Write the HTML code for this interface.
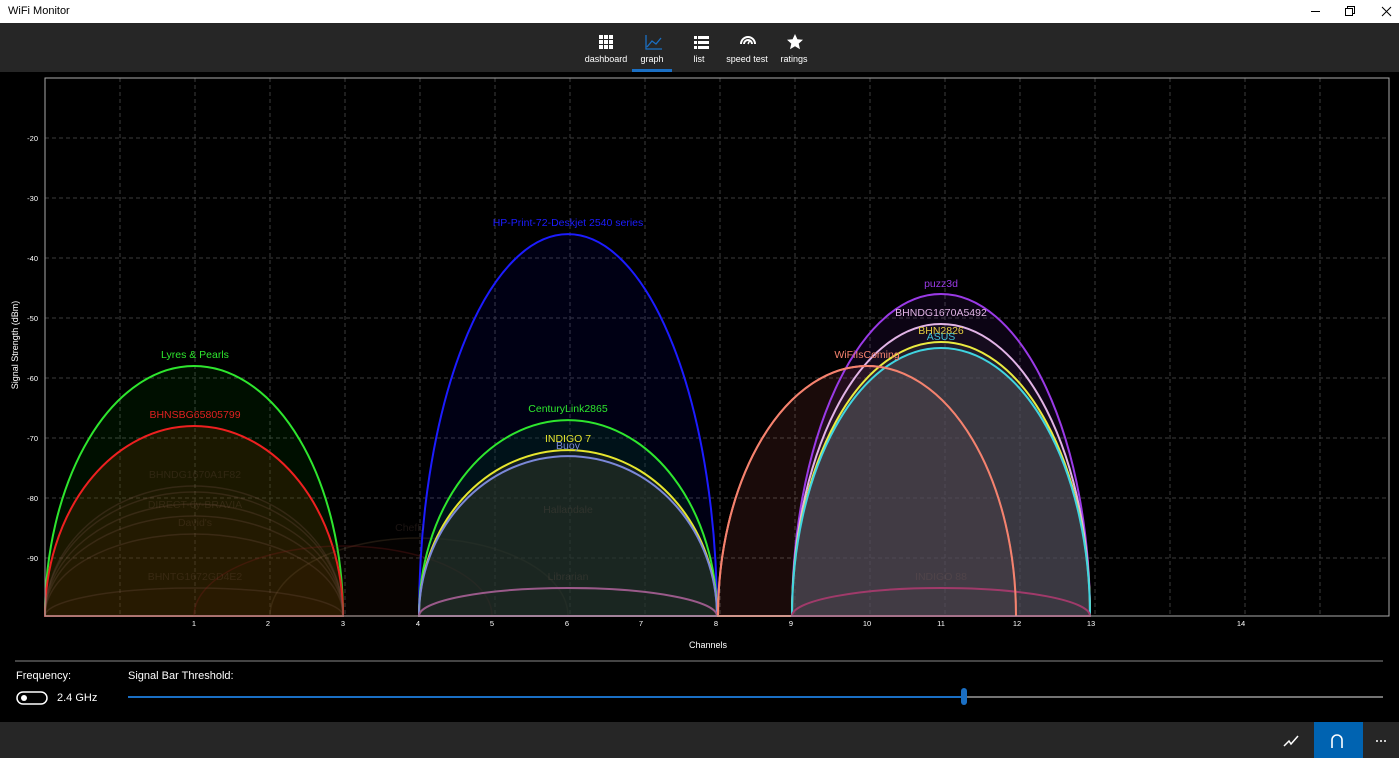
<!DOCTYPE html>
<html><head><meta charset="utf-8"><style>
html,body{margin:0;padding:0;width:1399px;height:758px;overflow:hidden;background:#000;font-family:"Segoe UI","Liberation Sans",sans-serif;}
#title{position:absolute;left:0;top:0;width:1399px;height:23px;background:#fff;}
#title span{position:absolute;left:8px;top:5px;font-size:11px;color:#000;}
#nav{position:absolute;left:0;top:23px;width:1399px;height:49px;background:#262626;}
.nb{position:absolute;top:31px;font-size:9px;color:#fff;text-align:center;width:60px;}
#bot{position:absolute;left:0;top:722px;width:1399px;height:36px;background:#262626;}
.t{position:absolute;color:#fff;font-size:11px;}
</style></head><body>
<div id="title"><span>WiFi Monitor</span>
<svg style="position:absolute;left:1300px;top:0" width="99" height="23"><g stroke="#000" stroke-width="1" fill="none"><line x1="11" y1="11.5" x2="20" y2="11.5"/><rect x="45.5" y="8.5" width="7" height="7"/><path d="M47.5 8.5V6.5h7v7h-2"/><path d="M82 7l9 9M91 7l-9 9"/></g></svg>
</div>
<div id="nav">
<svg width="1399" height="49" style="position:absolute;left:0;top:0">
<g fill="#fff">
<rect x="599" y="12" width="4" height="4"/><rect x="604" y="12" width="4" height="4"/><rect x="609" y="12" width="4" height="4"/>
<rect x="599" y="17" width="4" height="4"/><rect x="604" y="17" width="4" height="4"/><rect x="609" y="17" width="4" height="4"/>
<rect x="599" y="22" width="4" height="4"/><rect x="604" y="22" width="4" height="4"/><rect x="609" y="22" width="4" height="4"/>
<rect x="694" y="13" width="3" height="3"/><rect x="698" y="13" width="11" height="3"/>
<rect x="694" y="18" width="3" height="3"/><rect x="698" y="18" width="11" height="3"/>
<rect x="694" y="23" width="3" height="3"/><rect x="698" y="23" width="11" height="3"/>
<path d="M795 11l2.4 5.3 5.6.5-4.3 3.8 1.3 5.6-5-3-5 3 1.3-5.6-4.3-3.8 5.6-.5z"/>
</g>
<path d="M646 12v14h16M647 24l5-6 4 3 5-6" stroke="#1a6fc4" stroke-width="1.3" fill="none"/>
<path d="M741 21a7 7 0 0 1 14 0M744 21a4 4 0 0 1 8 0" stroke="#fff" stroke-width="2" fill="none"/><path d="M748 21l2-4" stroke="#fff" stroke-width="1.5"/>
<rect x="632" y="46" width="40" height="3" fill="#1a6fc4"/>
</svg>
<div class="nb" style="left:576px">dashboard</div>
<div class="nb" style="left:622px">graph</div>
<div class="nb" style="left:669px">list</div>
<div class="nb" style="left:717px">speed test</div>
<div class="nb" style="left:764px">ratings</div>
</div>
<svg width="1399" height="650" style="position:absolute;left:0;top:72px" font-family="Segoe UI, Liberation Sans, sans-serif">
<g transform="translate(0,-72)">
<g stroke="#3c3c3c" stroke-dasharray="4,3" stroke-width="1">
<line x1="120" y1="78" x2="120" y2="616"/><line x1="195" y1="78" x2="195" y2="616"/><line x1="270" y1="78" x2="270" y2="616"/><line x1="345" y1="78" x2="345" y2="616"/><line x1="420" y1="78" x2="420" y2="616"/><line x1="495" y1="78" x2="495" y2="616"/><line x1="570" y1="78" x2="570" y2="616"/><line x1="645" y1="78" x2="645" y2="616"/><line x1="720" y1="78" x2="720" y2="616"/><line x1="795" y1="78" x2="795" y2="616"/><line x1="870" y1="78" x2="870" y2="616"/><line x1="945" y1="78" x2="945" y2="616"/><line x1="1020" y1="78" x2="1020" y2="616"/><line x1="1095" y1="78" x2="1095" y2="616"/><line x1="1170" y1="78" x2="1170" y2="616"/><line x1="1245" y1="78" x2="1245" y2="616"/><line x1="1320" y1="78" x2="1320" y2="616"/>
<line x1="45" y1="138" x2="1389" y2="138"/><line x1="45" y1="198" x2="1389" y2="198"/><line x1="45" y1="258" x2="1389" y2="258"/><line x1="45" y1="318" x2="1389" y2="318"/><line x1="45" y1="378" x2="1389" y2="378"/><line x1="45" y1="438" x2="1389" y2="438"/><line x1="45" y1="498" x2="1389" y2="498"/><line x1="45" y1="558" x2="1389" y2="558"/>
</g>
<!-- ch1 -->
<path d="M45 616A149 250 0 0 1 343 616Z" fill="rgba(0,255,0,0.06)" stroke="#2ee62e" stroke-width="2"/>
<path d="M45 616A149 190 0 0 1 343 616Z" fill="rgba(90,45,0,0.3)" stroke="#ee2020" stroke-width="2"/>
<g fill="rgba(100,60,20,0.04)" stroke="rgba(140,100,90,0.22)" stroke-width="1.5">
<path d="M45 616A149 130 0 0 1 343 616Z"/><path d="M45 616A149 124 0 0 1 343 616Z"/><path d="M45 616A149 112 0 0 1 343 616Z"/><path d="M45 616A149 100 0 0 1 343 616Z"/><path d="M45 616A149 82 0 0 1 343 616Z"/><path d="M45 616A149 28 0 0 1 343 616Z"/>
<path d="M270 616A149 78 0 0 1 568 616Z" stroke="rgba(120,90,60,0.25)"/>
<path d="M194 616A149 70 0 0 1 492 616Z" stroke="rgba(130,30,30,0.3)"/>
</g>
<!-- ch6 -->
<path d="M419 616A149 382 0 0 1 717 616Z" fill="rgba(0,0,255,0.08)" stroke="#1c1cff" stroke-width="2"/>
<path d="M419 616A149 196 0 0 1 717 616Z" fill="rgba(0,60,40,0.3)" stroke="#2ee62e" stroke-width="2"/>
<path d="M419 616A149 166 0 0 1 717 616Z" fill="rgba(60,60,40,0.3)" stroke="#e6e62e" stroke-width="2"/>
<path d="M419 616A149 160 0 0 1 717 616Z" fill="rgba(40,50,40,0.4)" stroke="#7b88d8" stroke-width="2"/>
<path d="M419 616A149 28 0 0 1 717 616Z" fill="none" stroke="#9a5a8a" stroke-width="2"/>
<!-- ch10/11 -->
<path d="M718 616A149 250 0 0 1 1016 616Z" fill="rgba(255,110,100,0.1)" stroke="#f5826e" stroke-width="2"/>
<path d="M792 616A149 322 0 0 1 1090 616Z" fill="rgba(120,40,200,0.1)" stroke="#9a3ae6" stroke-width="2"/>
<path d="M792 616A149 292 0 0 1 1090 616Z" fill="rgba(100,70,110,0.12)" stroke="#e2b4e6" stroke-width="2"/>
<path d="M792 616A149 274 0 0 1 1090 616Z" fill="rgba(70,70,70,0.3)" stroke="#eaea40" stroke-width="2"/>
<path d="M792 616A149 268 0 0 1 1090 616Z" fill="rgba(80,84,90,0.5)" stroke="#40d4e0" stroke-width="2"/>
<path d="M792 616A149 28 0 0 1 1090 616Z" fill="none" stroke="#a03a6a" stroke-width="2"/>
<path d="M718 616A149 250 0 0 1 1016 616" fill="none" stroke="#f5826e" stroke-width="2"/>
<!-- labels -->
<g font-size="10.5" text-anchor="middle">
<text x="195" y="358" fill="#2ee62e">Lyres &amp; Pearls</text>
<text x="195" y="418" fill="#e02020">BHNSBG65805799</text>
<text x="568" y="226" fill="#1c1cff">HP-Print-72-Deskjet 2540 series</text>
<text x="568" y="412" fill="#2ee62e">CenturyLink2865</text>
<text x="568" y="442" fill="#e6e62e">INDIGO 7</text>
<text x="568" y="449" fill="#7b88d8">Buoy</text>
<text x="867" y="358" fill="#f5826e">WiFiIsComing</text>
<text x="941" y="287" fill="#9a3ae6">puzz3d</text>
<text x="941" y="316" fill="#e2b4e6">BHNDG1670A5492</text>
<text x="941" y="334" fill="#e6d040">BHN2826</text>
<text x="941" y="340" fill="#40c4d8">ASUS</text>
<g fill="rgba(150,110,100,0.18)"><text x="195" y="478">BHNDG1670A1F82</text><text x="195" y="508">DIRECT-0y-BRAVIA</text><text x="195" y="526">David's</text><text x="195" y="580">BHNTG1672GD4E2</text><text x="410" y="531">ChefD</text><text x="568" y="513">Hallandale</text><text x="568" y="580">Librarian</text><text x="941" y="580">INDIGO 88</text></g>
</g>
<rect x="45" y="78" width="1344" height="538" fill="none" stroke="#aaa" stroke-width="1"/>
<g font-size="7.5" fill="#fff" text-anchor="end">
<text x="38" y="141">-20</text><text x="38" y="201">-30</text><text x="38" y="261">-40</text><text x="38" y="321">-50</text><text x="38" y="381">-60</text><text x="38" y="441">-70</text><text x="38" y="501">-80</text><text x="38" y="561">-90</text>
</g>
<g font-size="7.5" fill="#fff" text-anchor="middle">
<text x="194" y="626">1</text><text x="268" y="626">2</text><text x="343" y="626">3</text><text x="418" y="626">4</text><text x="492" y="626">5</text><text x="567" y="626">6</text><text x="641" y="626">7</text><text x="716" y="626">8</text><text x="791" y="626">9</text><text x="867" y="626">10</text><text x="941" y="626">11</text><text x="1017" y="626">12</text><text x="1091" y="626">13</text><text x="1241" y="626">14</text>
<text x="708" y="648" font-size="9">Channels</text>
<text transform="translate(18,345) rotate(-90)" font-size="9">Signal Strength (dBm)</text>
</g>
<line x1="15" y1="661" x2="1383" y2="661" stroke="#888" stroke-width="1"/>
<line x1="128" y1="697" x2="964" y2="697" stroke="#1a6fc4" stroke-width="2"/>
<line x1="964" y1="697" x2="1383" y2="697" stroke="#999" stroke-width="1.5"/>
<rect x="961" y="688" width="6" height="17" rx="3" fill="#1a6fc4"/>
<rect x="17" y="692" width="30" height="12" rx="6" fill="none" stroke="#fff" stroke-width="1.5"/>
<circle cx="24" cy="698" r="3" fill="#fff"/>
</g></svg>
<div class="t" style="left:16px;top:670px">Frequency:</div>
<div class="t" style="left:128px;top:670px">Signal Bar Threshold:</div>
<div class="t" style="left:57px;top:692px">2.4 GHz</div>
<div id="bot">
<svg width="1399" height="36" style="position:absolute;left:0;top:0">
<path d="M1284 24l5-5 2 3 7-8" stroke="#fff" stroke-width="1.5" fill="none"/>
<rect x="1314" y="0" width="49" height="36" fill="#0063b1"/>
<path d="M1332 26v-8a5 5 0 0 1 10 0v8" stroke="#fff" stroke-width="1.6" fill="none"/>
<g fill="#fff"><circle cx="1377" cy="19" r="1"/><circle cx="1381" cy="19" r="1"/><circle cx="1385" cy="19" r="1"/></g>
</svg>
</div>
</body></html>
